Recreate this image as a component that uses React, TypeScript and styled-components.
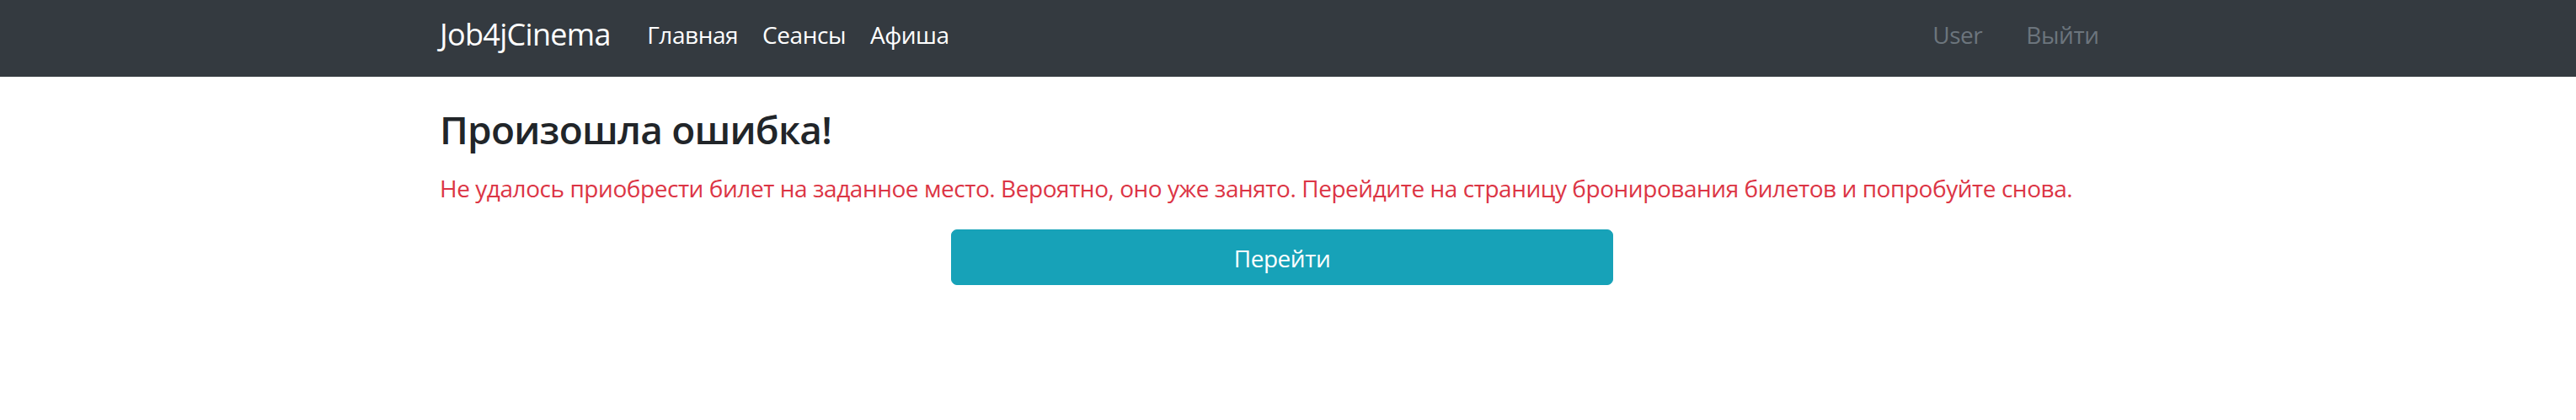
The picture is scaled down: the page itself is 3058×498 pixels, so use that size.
import React from "react";
import styled, { createGlobalStyle } from "styled-components";

const GlobalStyle = createGlobalStyle`
  html, body {
    margin: 0;
    padding: 0;
    background: #ffffff;
    font-family: "Open Sans", "Noto Sans", sans-serif;
    color: #212529;
  }
  * { box-sizing: border-box; }
`;

const NavBar = styled.nav`
  height: 91px;
  background: #343a40;
  display: flex;
  align-items: center;
  padding-bottom: 10px;
`;

const Container = styled.div`
  width: 2014px;
  margin: 0 auto;
  display: flex;
  align-items: center;
`;

const Brand = styled.a`
  font-size: 36px;
  line-height: 1.5;
  letter-spacing: -0.7px;
  color: #ffffff;
  text-decoration: none;
  margin-right: 29px;
`;

const NavList = styled.div<{ $right?: boolean }>`
  display: flex;
  align-items: center;
  margin-left: ${(p) => (p.$right ? "auto" : "0")};
  gap: ${(p) => (p.$right ? "23px" : "0")};
  padding-right: ${(p) => (p.$right ? "30px" : "0")};
`;

const NavLink = styled.a<{ $muted?: boolean }>`
  font-size: 28px;
  line-height: 1.5;
  letter-spacing: -0.45px;
  padding: 0 14.5px;
  color: ${(p) => (p.$muted ? "#6c757d" : "#ffffff")};
  text-decoration: none;
`;

const Main = styled.main`
  width: 2014px;
  margin: 0 auto;
  padding-top: 35px;
`;

const Title = styled.h3`
  margin: 0 0 21px;
  font-size: 46px;
  font-weight: 600;
  line-height: 1.2;
  letter-spacing: -0.8px;
  color: #212529;
`;

const ErrorText = styled.p`
  margin: 0 0 28px;
  font-size: 28px;
  line-height: 1.5;
  letter-spacing: -0.45px;
  color: #dc3545;
`;

const ButtonRow = styled.div`
  display: flex;
  justify-content: center;
  padding-right: 14px;
`;

const Button = styled.button`
  width: 786px;
  height: 66px;
  padding: 12px 0 10px;
  border: 1px solid #17a2b8;
  border-radius: 7px;
  background: #17a2b8;
  color: #ffffff;
  font-family: "Open Sans", "Noto Sans", sans-serif;
  font-size: 28px;
  line-height: 42px;
  letter-spacing: -0.45px;
  cursor: pointer;
`;

export default function App() {
  return (
    <>
      <GlobalStyle />
      <NavBar>
        <Container>
          <Brand href="#">Job4jCinema</Brand>
          <NavList>
            <NavLink href="#">Главная</NavLink>
            <NavLink href="#">Сеансы</NavLink>
            <NavLink href="#">Афиша</NavLink>
          </NavList>
          <NavList $right>
            <NavLink $muted href="#">User</NavLink>
            <NavLink $muted href="#">Выйти</NavLink>
          </NavList>
        </Container>
      </NavBar>
      <Main>
        <Title>Произошла ошибка!</Title>
        <ErrorText>
          Не удалось приобрести билет на заданное место. Вероятно, оно уже занято. Перейдите на страницу бронирования билетов и попробуйте снова.
        </ErrorText>
        <ButtonRow>
          <Button>Перейти</Button>
        </ButtonRow>
      </Main>
    </>
  );
}
